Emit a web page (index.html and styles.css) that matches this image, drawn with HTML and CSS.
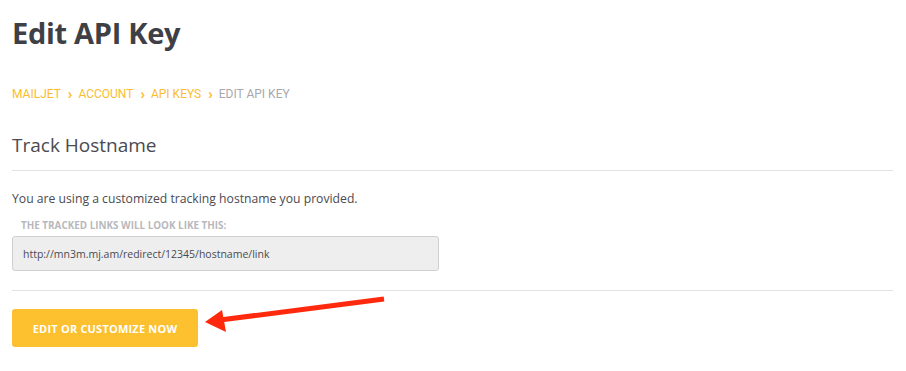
FILE: index.html
```html
<!DOCTYPE html>
<html>
<head>
<meta charset="utf-8">
<link rel="stylesheet" href="styles.css">
</head>
<body>
<div class="page">
  <h1 class="title">Edit API Key</h1>
  <nav class="crumbs">
    <a class="crumb">MAILJET</a><span class="sep">›</span>
    <a class="crumb">ACCOUNT</a><span class="sep">›</span>
    <a class="crumb">API KEYS</a><span class="sep">›</span>
    <span class="crumb current">EDIT API KEY</span>
  </nav>
  <section class="panel">
    <h2 class="panel-title">Track Hostname</h2>
    <div class="panel-body">
      <p class="info">You are using a customized tracking hostname you provided.</p>
      <label class="field-label">THE TRACKED LINKS WILL LOOK LIKE THIS:</label>
      <div class="field">http://mn3m.mj.am/redirect/12345/hostname/link</div>
    </div>
    <div class="actions">
      <button class="btn">EDIT OR CUSTOMIZE NOW</button>
    </div>
  </section>
</div>
<svg class="arrow" width="906" height="371" viewBox="0 0 906 371">
  <line x1="384" y1="299" x2="220" y2="320" stroke="#ff2a0d" stroke-width="5" stroke-linecap="butt"/>
  <polygon points="205,322 222,310 226,332" fill="#ff2a0d"/>
</svg>
</body>
</html>
```

FILE: styles.css
```css
html, body {
  margin: 0;
  padding: 0;
  background: #fff;
}
body {
  font-family: "Open Sans", "DejaVu Sans", sans-serif;
  color: #4a4a50;
}
.page {
  padding: 0 13px 0 12px;
}
.title {
  margin: 0;
  padding-top: 13px;
  font-size: 29px;
  line-height: 40px;
  font-weight: 700;
  color: #3f3f46;
  letter-spacing: -0.3px;
}
.crumbs {
  margin-top: 34px;
  font-family: "Roboto", "Liberation Sans", sans-serif;
  font-size: 12px;
  line-height: 14px;
  display: flex;
  align-items: center;
}
.crumb {
  color: #fbbd2e;
}
.crumb.current {
  color: #a8a8ae;
}
.sep {
  color: #fbbd2e;
  font-weight: 900;
  margin: 0 6px 0 7px;
  font-size: 15px;
  line-height: 14px;
}
.panel {
  margin-top: 31px;
}
.panel-title {
  margin: 0;
  font-size: 19px;
  font-weight: 400;
  line-height: 26px;
  color: #4a4a50;
  padding-bottom: 12px;
  border-bottom: 1px solid #e2e2e6;
}
.panel-body {
  padding: 19px 0 19px;
  border-bottom: 1px solid #e2e2e6;
}
.info {
  margin: 0;
  font-size: 12.2px;
  line-height: 18px;
  color: #4a4a50;
}
.field-label {
  display: block;
  margin: 11px 0 0 9px;
  font-size: 9.9px;
  font-weight: 700;
  color: #b8b8bc;
  line-height: 12px;
}
.field {
  margin-top: 5px;
  width: 427px;
  height: 35px;
  box-sizing: border-box;
  padding: 0 10px;
  display: flex;
  align-items: center;
  background: #eeeeee;
  border: 1px solid #cfcfd2;
  border-radius: 3px;
  font-size: 10.5px;
  color: #4a4a50;
}
.actions {
  padding-top: 18px;
}
.btn {
  width: 186px;
  height: 38px;
  border: 0;
  border-radius: 3px;
  background: #fdc02f;
  color: #fff;
  font-family: "Open Sans", "DejaVu Sans", sans-serif;
  font-weight: 700;
  font-size: 11px;
  letter-spacing: 0.2px;
  padding: 0;
}
.arrow {
  position: absolute;
  left: 0;
  top: 0;
  pointer-events: none;
}
```
